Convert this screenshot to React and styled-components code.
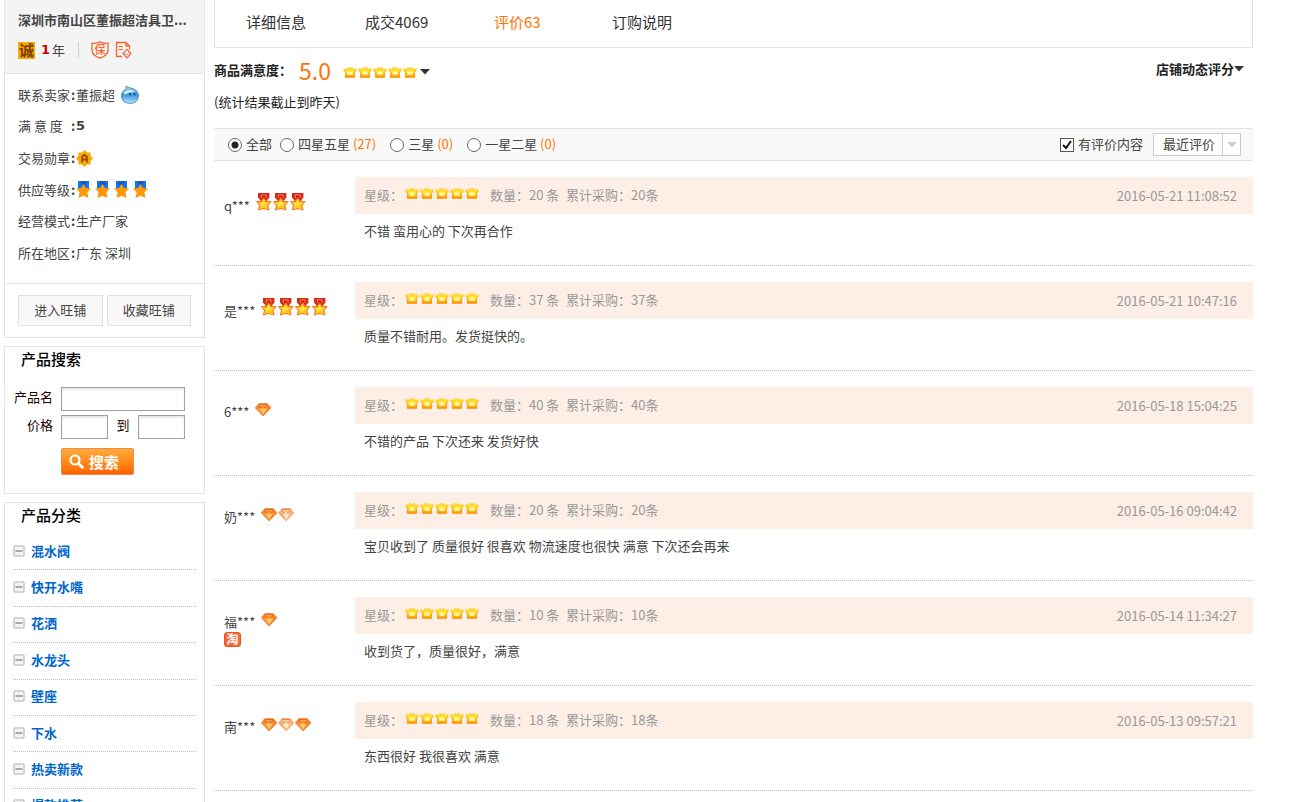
import React, { useState } from 'react';
import styled, { createGlobalStyle } from 'styled-components';

const GlobalStyle = createGlobalStyle`
  * {
    box-sizing: border-box;
  }

  body {
    margin: 0;
    background: #fff;
    color: #444;
    font-family: "Noto Sans CJK SC", "Open Sans", sans-serif;
    font-size: 13px;
    line-height: 18px;
  }

  button, input, select {
    font: inherit;
    color: inherit;
    margin: 0;
  }

  ul {
    list-style: none;
    margin: 0;
    padding: 0;
  }

  a {
    color: inherit;
    text-decoration: none;
  }

  svg {
    display: block;
    flex: none;
  }
`;

const Page = styled.div`
  display: flex;
  align-items: flex-start;
  gap: 9px;
  padding: 0 47px 0 4px;
  height: 100vh;
  overflow: hidden;
`;

const Sidebar = styled.aside`
  flex: none;
  width: 201px;
  display: flex;
  flex-direction: column;
  gap: 8px;
`;

const Card = styled.section`
  border: 1px solid #e5e5e5;
  border-top-width: ${(p) => (p.$open ? 0 : 1)}px;
  background: #fff;
`;

const CardTitle = styled.h2`
  margin: 0;
  padding: 1px 16px 3px;
  color: #000;
  font-size: 15px;
  font-weight: 500;
  line-height: 22px;
`;

const ShopHead = styled.div`
  padding: 11px 13px 14px;
  background: #f4f4f4;
  border-bottom: 1px solid #e5e5e5;
`;

const ShopName = styled.h1`
  margin: 0 0 12px;
  font-size: 13px;
  font-weight: 700;
  line-height: 18px;
  white-space: nowrap;
`;

const ShopBadges = styled.div`
  display: flex;
  align-items: center;
  height: 18px;
  gap: 6px;
`;

const CreditBadge = styled.span`
  width: 17px;
  height: 17px;
  background: #f5ac00;
  color: #7a3a00;
  font-size: 15px;
  font-weight: 700;
  line-height: 16px;
  text-align: center;
`;

const Years = styled.span`
  display: flex;
  gap: 2px;
  padding-right: 13px;
  margin-right: 6px;
  border-right: 1px solid #d6d0c4;
  line-height: 16px;

  b {
    color: #c00;
    font-family: "DejaVu Sans", sans-serif;
  }
`;

const InfoWrap = styled.div`
  padding: 5px 0 14px;
`;

const ShopInfo = styled.dl`
  display: grid;
  grid-auto-rows: 1fr;
  min-height: 190px;
  margin: 0;
  padding: 0 13px;
`;

const InfoLine = styled.div`
  display: flex;
  align-items: center;

  dt {
    display: flex;
    width: 58px;
    white-space: nowrap;
  }

  dt span {
    width: 53px;
  }

  dd {
    display: flex;
    align-items: center;
    gap: ${(p) => p.$gap || 2}px;
    margin: 0;
  }
`;

const Score = styled.b`
  font-family: "DejaVu Sans", sans-serif;
`;

const ShopActions = styled.div`
  display: flex;
  gap: 4px;
  padding: 11px 13px;
  border-top: 1px solid #e5e5e5;
`;

const GrayButton = styled.button`
  flex: 1;
  height: 31px;
  padding: 0 0 2px;
  border: 1px solid #e2e2e2;
  background: #f8f8f8;
  cursor: pointer;
`;

const SearchForm = styled.form`
  display: grid;
  grid-template-columns: 40px 1fr;
  column-gap: 8px;
  row-gap: 4px;
  align-items: center;
  padding: 14px 19px 18px 8px;
  color: #200;

  label {
    padding-bottom: 4px;
    text-align: right;
    white-space: nowrap;
  }
`;

const TextInput = styled.input`
  width: 100%;
  min-width: 0;
  height: 24px;
  padding: 0 4px;
  border: 1px solid #a0a0a0;
  box-shadow: inset 0 2px 2px #e8e8e8;
`;

const PriceRange = styled.div`
  display: flex;
  align-items: center;
  gap: 8px;

  label {
    flex: none;
  }
`;

const SearchButton = styled.button`
  grid-column: 2;
  display: flex;
  align-items: center;
  gap: 5px;
  width: 73px;
  height: 27px;
  margin-top: 5px;
  padding: 0 0 0 7px;
  border: 1px solid #f08a4a;
  border-radius: 2px;
  background: linear-gradient(#ffac3c, #ff8a1c 50%, #ff6200);
  color: #fff;
  font-size: 15px;
  font-weight: 700;
  line-height: 20px;
  cursor: pointer;
`;

const CategoryList = styled.ul`
  display: grid;
  grid-auto-rows: 1fr;
  min-height: 291px;
  padding: 0 8px;
  margin-top: 5px;
`;

const Category = styled.li`
  display: flex;
  align-items: center;
  gap: 6px;
  padding-bottom: 2px;
  border-bottom: 1px dotted #bbb;
  color: #06c;
  font-weight: 700;
`;

const Main = styled.main`
  flex: 1;
  min-width: 0;
`;

const Tabs = styled.nav`
  display: grid;
  grid-template-columns: 119px 129px 118px auto;
  height: 48px;
  padding: 11px 31px 0;
  border: 1px solid #e5e5e5;
  border-top: 0;
`;

const Tab = styled.a`
  color: ${(p) => (p.$active ? '#ff7300' : '#333')};
  font-size: 15px;
  line-height: 22px;
`;

const Summary = styled.div`
  display: flex;
  align-items: center;
  height: 44px;
  padding-right: 9px;
  color: #222;
  font-weight: 700;
`;

const BigScore = styled.span`
  margin: 0 12px 0 7px;
  color: #ff7300;
  font-size: 23px;
  font-weight: 400;
  line-height: 28px;
`;

const DropLink = styled.button`
  display: flex;
  align-items: center;
  gap: ${(p) => (p.$end ? 0 : 3)}px;
  margin-left: ${(p) => (p.$end ? 'auto' : 0)};
  padding: ${(p) => (p.$end ? '0 0 2px' : '4px 0 0')};
  border: 0;
  background: none;
  cursor: pointer;
`;

const Note = styled.p`
  margin: 0 0 16px;
  line-height: 20px;
  color: #222;
`;

const FilterBar = styled.div`
  display: flex;
  align-items: center;
  height: 33px;
  padding: 0 12px 0 14px;
  border: 1px solid #e2e2e2;
  border-width: 1px 0;
  background: #f9f9f9;
`;

const Choice = styled.label`
  display: flex;
  align-items: center;
  gap: 4px;
  margin-right: ${(p) => p.$gap}px;
  white-space: nowrap;

  span {
    padding-bottom: 2px;
  }

  em {
    color: #ff7300;
    font-style: normal;
  }
`;

const Radio = styled.input`
  appearance: none;
  width: 14px;
  height: 14px;
  border: 1px solid #666;
  border-radius: 50%;
  background: #fff;

  &:checked {
    background: radial-gradient(circle, #222 3px, #fff 4px);
  }
`;

const Checkbox = styled.input`
  appearance: none;
  width: 14px;
  height: 14px;
  border: 1px solid #555;
  background: #fff;

  &:checked {
    background: #fff url("data:image/svg+xml,%3Csvg xmlns='http://www.w3.org/2000/svg' viewBox='0 0 12 12'%3E%3Cpath d='M2 6l3 3 5-7' fill='none' stroke='%23111' stroke-width='2'/%3E%3C/svg%3E");
  }
`;

const FilterEnd = styled.div`
  display: flex;
  align-items: center;
  margin-left: auto;
`;

const SortBox = styled.div`
  display: flex;
  align-items: center;
  height: 23px;
  border: 1px solid #ccc;
  background: #fff;
`;

const SortSelect = styled.select`
  appearance: none;
  width: 69px;
  height: 21px;
  padding: 0 8px 2px 9px;
  border: 0;
  border-right: 1px solid #ccc;
  background: none;
  line-height: 18px;
`;

const SortArrow = styled.span`
  width: 17px;
  display: flex;
  justify-content: center;
`;

const Review = styled.li`
  display: flex;
  height: 105px;
  padding-top: 16px;
  border-bottom: 1px dotted #bbb;
`;

const Buyer = styled.div`
  flex: none;
  width: 141px;
  padding: 16px 0 0 10px;
`;

const BuyerName = styled.div`
  display: flex;
  align-items: baseline;
  gap: 6px;
  line-height: 14px;
`;

const Ranks = styled.span`
  display: flex;
`;

const TaoBadge = styled.span`
  display: block;
  width: 17px;
  height: 15px;
  margin-top: 3px;
  border: 1px solid #f0501c;
  border-radius: 3px;
  background: #f26a3a;
  color: #fff;
  font-size: 12px;
  font-weight: 700;
  line-height: 12px;
  text-align: center;
`;

const ReviewBody = styled.div`
  flex: 1;
  min-width: 0;
`;

const ReviewMeta = styled.div`
  display: flex;
  align-items: center;
  height: 37px;
  padding: 0 16px 0 9px;
  background: #fdeee6;
  color: #999;
  white-space: nowrap;
`;

const Amount = styled.span`
  width: ${(p) => p.$width}px;
  padding-bottom: 2px;
`;

const MetaStars = styled.span`
  margin: 0 11px 5px 1px;
`;

const ReviewTime = styled.time`
  margin-left: auto;
`;

const ReviewText = styled.p`
  margin: 0;
  padding: 8px 9px;
`;

const StarRow = styled.span`
  display: flex;
  gap: 1px;
`;

const Star = () => (
    <svg width="14" height="12" viewBox="0 0 14 12">
        <path d="M.5 2.200 4 2.800 4.800 .8 7 2 9.200 .8 10 2.800 13.500 2.200V4.600L11.400 6.400 12 11.400H2L2.600 6.400 .5 4.600Z" fill="url(#gold)" />
        <path d="M2 11.200h10M2.300 10.500 2.900 6.300 .8 4.300M11.700 10.500 11.100 6.300 13.200 4.300" fill="none" stroke="#ff8a00" strokeWidth=".8" />
        <path d="M4.500 8.800V5L6 6.200 7 4.500 8 6.200 9.500 5V8.800Z" fill="#fff9b0" />
    </svg>
);

const Stars = () => (
    <StarRow>
        {[1, 2, 3, 4, 5].map(n => <Star key={n} />)}
    </StarRow>
);

const Medal = () => (
    <svg width="17" height="18" viewBox="0 0 17 18">
        <path d="M2 0h11.400v4.500L10.500 8H5L2 4.500z" fill="#d8291c" />
        <path d="M5 1.500h5.500V5H5z" fill="#f08a50" />
        <path d="M6 2.500h3.500V6H6z" fill="#c01510" />
        <path d="M7.700 3.800 10.300 7.800 15.800 8.200 12.400 12.500 13.600 17.600 7.700 16 1.800 17.600 3 12.500 -.2 8.200 5.100 7.800Z" fill="#f87020" />
        <path d="M7.700 5.500 9.700 9 14.200 9.200 11.300 12.300 12.300 16.400 7.700 14.900 3.100 16.400 4.100 12.300 1.200 9.200 5.700 9Z" fill="#ffc81e" />
        <path d="M7.700 6.500 8.800 9.800 12 10.200 7 12.500 4.500 14.500 5.300 11.800 3 10 6.400 9.800Z" fill="#ffe648" />
    </svg>
);

const Diamond = ({ pale }) => (
    <svg width="17" height="14" viewBox="0 0 17 14">
        <path d="M3.800 .8h8.600L16 4.800 8.100 13 .3 4.800Z" fill={pale ? '#f8b27a' : '#f6862a'} />
        <path d="M4.500 2h7.200L8.100 5.200z" fill={pale ? '#fdd9ae' : '#ffb04a'} />
        <path d="M4 5.600h8.200L8.100 11.500z" fill={pale ? '#ffe6cc' : '#ffc768'} />
        <path d="M1 4.800 4.200 5.600 8.100 12.400Z" fill={pale ? '#f2a468' : '#f9963c'} />
        <path d="M3.800 1.200h8.600" stroke="#ea5a18" />
        <path d="M4 1.500 5.500 5.200 8.100 3 10.700 5.200 12.200 1.500" fill="none" stroke={pale ? '#f09a60' : '#e8691c'} strokeWidth=".8" />
        <path d="M3.800 .8h8.600L16 4.800 8.100 13 .3 4.800Z" fill="none" stroke={pale ? '#f2a878' : '#ec7430'} strokeWidth=".7" />
    </svg>
);

const BlueMedal = () => (
    <svg width="15" height="18" viewBox="0 0 15 18">
        <path d="M2 0h11v8H2z" fill="#0a78f0" />
        <path d="M5 0h5v4H5z" fill="#1c55c0" />
        <path d="M7.500 2.800 9.700 6.800 15 7.400 11.400 11.200 12.600 17 7.500 14.700 2.400 17 3.600 11.200 0 7.400 5.300 6.800Z" fill="#ff9708" />
    </svg>
);

const TradeBadge = () => (
    <svg width="17" height="17" viewBox="0 0 17 17">
        <path d="M8.500 0 11 2.400h3.600V6L17 8.500 14.600 11v3.600H11L8.500 17 6 14.600H2.400V11L0 8.500 2.400 6V2.400H6Z" fill="#f8a900" />
        <path d="M6 12.500V7l2.500-2.200L11 7v5.500M6 9.500h5" fill="none" stroke="#9a4d00" strokeWidth="1.800" />
    </svg>
);

const WangWang = () => (
    <svg width="18" height="18" viewBox="0 0 18 18">
        <path d="M4.500 .5Q7.500 1 9.500 2 17.500 3.500 17.500 10 17 17.400 9 17.400 .5 17 .5 10 .6 5 5.500 2.600Z" fill="url(#drop)" stroke="#3d7fa8" strokeWidth=".8" />
        <path d="M3 6.500Q8 2 14 6 8 5.500 3 8.500Z" fill="#d5f0ff" />
        <path d="M9 7v2.200M13.500 7v2.200" stroke="#143d6c" strokeWidth="1.600" />
    </svg>
);

const Shield = () => (
    <svg width="18" height="18" viewBox="0 0 18 18">
        <path d="M9 .8Q12 3 17 2.200V9Q17 14.500 9 17.200 1 14.500 1 9V2.200Q6 3 9 .8Z" fill="#fff8f2" stroke="#f2642a" strokeWidth="1.300" />
        <text x="9" y="13" fontSize="11" fontWeight="500" textAnchor="middle" fill="#f2642a">保</text>
    </svg>
);

const Certificate = () => (
    <svg width="17" height="18" viewBox="0 0 17 18">
        <path d="M7 15.500H1.500V1.500H11L14.500 5V8.500M11 1.500V5H14.500" fill="none" stroke="#f2642a" strokeWidth="1.300" />
        <path d="M3.500 5.500H8M3.500 8.500H8" stroke="#f2642a" strokeWidth="1.200" />
        <path d="M12 8.400 16 12.500 12 16.800 8 12.500Z" fill="#fff" stroke="#f2642a" strokeWidth="1.200" />
        <path d="M10 12.200 11.700 14 14.500 11" fill="none" stroke="#f2642a" />
    </svg>
);

const Caret = ({ color = '#333' }) => (
    <svg width="10" height="6" viewBox="0 0 10 6">
        <path d="M0 0h10L5 5.500z" fill={color} />
    </svg>
);

const Minus = () => (
    <svg width="12" height="12" viewBox="0 0 12 12">
        <rect x="1" y="1" width="10" height="10" rx="1" fill="#f4f4f4" stroke="#c8c8c8" strokeWidth="1.500" />
        <path d="M2.500 6h7" stroke="#777" strokeWidth="1.200" />
    </svg>
);

const Magnifier = () => (
    <svg width="15" height="15" viewBox="0 0 15 15">
        <circle cx="6" cy="6" r="4.500" fill="none" stroke="#fff" strokeWidth="2.200" />
        <path d="M9.500 9.500l4 4" stroke="#fff" strokeWidth="2.800" strokeLinecap="round" />
    </svg>
);

const Defs = styled.svg`
  position: absolute;
`;

const Gradients = () => (
    <Defs width="0" height="0">
        <defs>
            <linearGradient id="gold" x1="0" y1="0" x2="0" y2="1">
                <stop offset="0" stopColor="#ffc93a" />
                <stop offset=".5" stopColor="#ffe920" />
                <stop offset="1" stopColor="#ff9000" />
            </linearGradient>
            <linearGradient id="drop" x1="0" y1="0" x2="0" y2="1">
                <stop offset="0" stopColor="#a5dcf8" />
                <stop offset=".5" stopColor="#3d96dc" />
                <stop offset="1" stopColor="#b0e8ff" />
            </linearGradient>
        </defs>
    </Defs>
);

const categories = ['混水阀', '快开水嘴', '花洒', '水龙头', '壁座', '下水', '热卖新款', '爆款推荐'];

const filters = [
    { id: 'all', label: '全部', gap: 8 },
    { id: 'good', label: '四星五星', count: 27, gap: 14 },
    { id: 'middle', label: '三星', count: 0, gap: 14 },
    { id: 'bad', label: '一星二星', count: 0, gap: 0 },
];

const reviews = [
    { name: 'q***', ranks: ['medal', 'medal', 'medal'], amount: 20, time: '2016-05-21 11:08:52', text: '不错 蛮用心的 下次再合作' },
    { name: '是***', ranks: ['medal', 'medal', 'medal', 'medal'], amount: 37, time: '2016-05-21 10:47:16', text: '质量不错耐用。发货挺快的。' },
    { name: '6***', ranks: ['diamond'], amount: 40, time: '2016-05-18 15:04:25', text: '不错的产品 下次还来 发货好快' },
    { name: '奶***', ranks: ['diamond', 'pale'], amount: 20, time: '2016-05-16 09:04:42', text: '宝贝收到了 质量很好 很喜欢 物流速度也很快 满意 下次还会再来' },
    { name: '福***', ranks: ['diamond'], tao: true, amount: 10, time: '2016-05-14 11:34:27', text: '收到货了，质量很好，满意' },
    { name: '南***', ranks: ['diamond', 'pale', 'diamond'], amount: 18, time: '2016-05-13 09:57:21', text: '东西很好 我很喜欢 满意' },
];

const ShopCard = () => (
    <Card $open>
        <ShopHead>
            <ShopName>深圳市南山区董振超洁具卫...</ShopName>
            <ShopBadges>
                <CreditBadge>诚</CreditBadge>
                <Years><b>1</b>年</Years>
                <Shield />
                <Certificate />
            </ShopBadges>
        </ShopHead>
        <InfoWrap>
            <ShopInfo>
                <InfoLine $gap={6}><dt><span>联系卖家</span><b>:</b></dt><dd>董振超<WangWang /></dd></InfoLine>
                <InfoLine><dt><span>满 意 度</span><b>:</b></dt><dd><Score>5</Score></dd></InfoLine>
                <InfoLine><dt><span>交易勋章</span><b>:</b></dt><dd><TradeBadge /></dd></InfoLine>
                <InfoLine $gap={4}><dt><span>供应等级</span><b>:</b></dt><dd><BlueMedal /><BlueMedal /><BlueMedal /><BlueMedal /></dd></InfoLine>
                <InfoLine><dt><span>经营模式</span><b>:</b></dt><dd>生产厂家</dd></InfoLine>
                <InfoLine><dt><span>所在地区</span><b>:</b></dt><dd>广东 深圳</dd></InfoLine>
            </ShopInfo>
        </InfoWrap>
        <ShopActions>
            <GrayButton type="button">进入旺铺</GrayButton>
            <GrayButton type="button">收藏旺铺</GrayButton>
        </ShopActions>
    </Card>
);

const SearchCard = () => (
    <Card>
        <CardTitle>产品搜索</CardTitle>
        <SearchForm onSubmit={(e) => e.preventDefault()}>
            <label htmlFor="keyword">产品名</label>
            <TextInput id="keyword" type="text" />
            <label htmlFor="price-from">价格</label>
            <PriceRange>
                <TextInput id="price-from" type="text" />
                <label htmlFor="price-to">到</label>
                <TextInput id="price-to" type="text" />
            </PriceRange>
            <SearchButton type="submit"><Magnifier />搜索</SearchButton>
        </SearchForm>
    </Card>
);

const CategoryCard = () => (
    <Card>
        <CardTitle>产品分类</CardTitle>
        <CategoryList>
            {categories.map(name => (
                <Category key={name}>
                    <Minus />
                    <a href="#category">{name}</a>
                </Category>
            ))}
        </CategoryList>
    </Card>
);

const ReviewItem = ({ review }) => (
    <Review>
        <Buyer>
            <BuyerName>
                {review.name}
                <Ranks>
                    {review.ranks.map((rank, i) => (
                        rank === 'medal' ? <Medal key={i} /> : <Diamond key={i} pale={rank === 'pale'} />
                    ))}
                </Ranks>
            </BuyerName>
            {review.tao && <TaoBadge>淘</TaoBadge>}
        </Buyer>
        <ReviewBody>
            <ReviewMeta>
                <Amount $width={40}>星级：</Amount>
                <MetaStars><Stars /></MetaStars>
                <Amount $width={76}>数量：{review.amount} 条</Amount>
                <Amount $width={96}>累计采购：{review.amount}条</Amount>
                <ReviewTime>{review.time}</ReviewTime>
            </ReviewMeta>
            <ReviewText>{review.text}</ReviewText>
        </ReviewBody>
    </Review>
);

const App = () => {
    const [level, setLevel] = useState('all');

    return (
        <>
            <GlobalStyle />
            <Gradients />
            <Page>
                <Sidebar>
                    <ShopCard />
                    <SearchCard />
                    <CategoryCard />
                </Sidebar>
                <Main>
                    <Tabs>
                        <Tab href="#detail">详细信息</Tab>
                        <Tab href="#deals">成交4069</Tab>
                        <Tab href="#reviews" $active>评价63</Tab>
                        <Tab href="#guide">订购说明</Tab>
                    </Tabs>
                    <Summary>
                        商品满意度：
                        <BigScore>5.0</BigScore>
                        <DropLink type="button" aria-label="评分详情"><Stars /><Caret /></DropLink>
                        <DropLink type="button" $end>店铺动态评分<Caret /></DropLink>
                    </Summary>
                    <Note>(统计结果截止到昨天)</Note>
                    <FilterBar>
                        {filters.map(f => (
                            <Choice key={f.id} $gap={f.gap}>
                                <Radio type="radio" name="level" checked={level === f.id} onChange={() => setLevel(f.id)} />
                                <span>{f.label} {f.count !== undefined && <em>({f.count})</em>}</span>
                            </Choice>
                        ))}
                        <FilterEnd>
                            <Choice $gap={10}>
                                <Checkbox type="checkbox" defaultChecked />
                                <span>有评价内容</span>
                            </Choice>
                            <SortBox>
                                <SortSelect aria-label="排序">
                                    <option>最近评价</option>
                                </SortSelect>
                                <SortArrow><Caret color="#ccc" /></SortArrow>
                            </SortBox>
                        </FilterEnd>
                    </FilterBar>
                    <ul>
                        {reviews.map(r => <ReviewItem key={r.time} review={r} />)}
                    </ul>
                </Main>
            </Page>
        </>
    );
};

export default App;
